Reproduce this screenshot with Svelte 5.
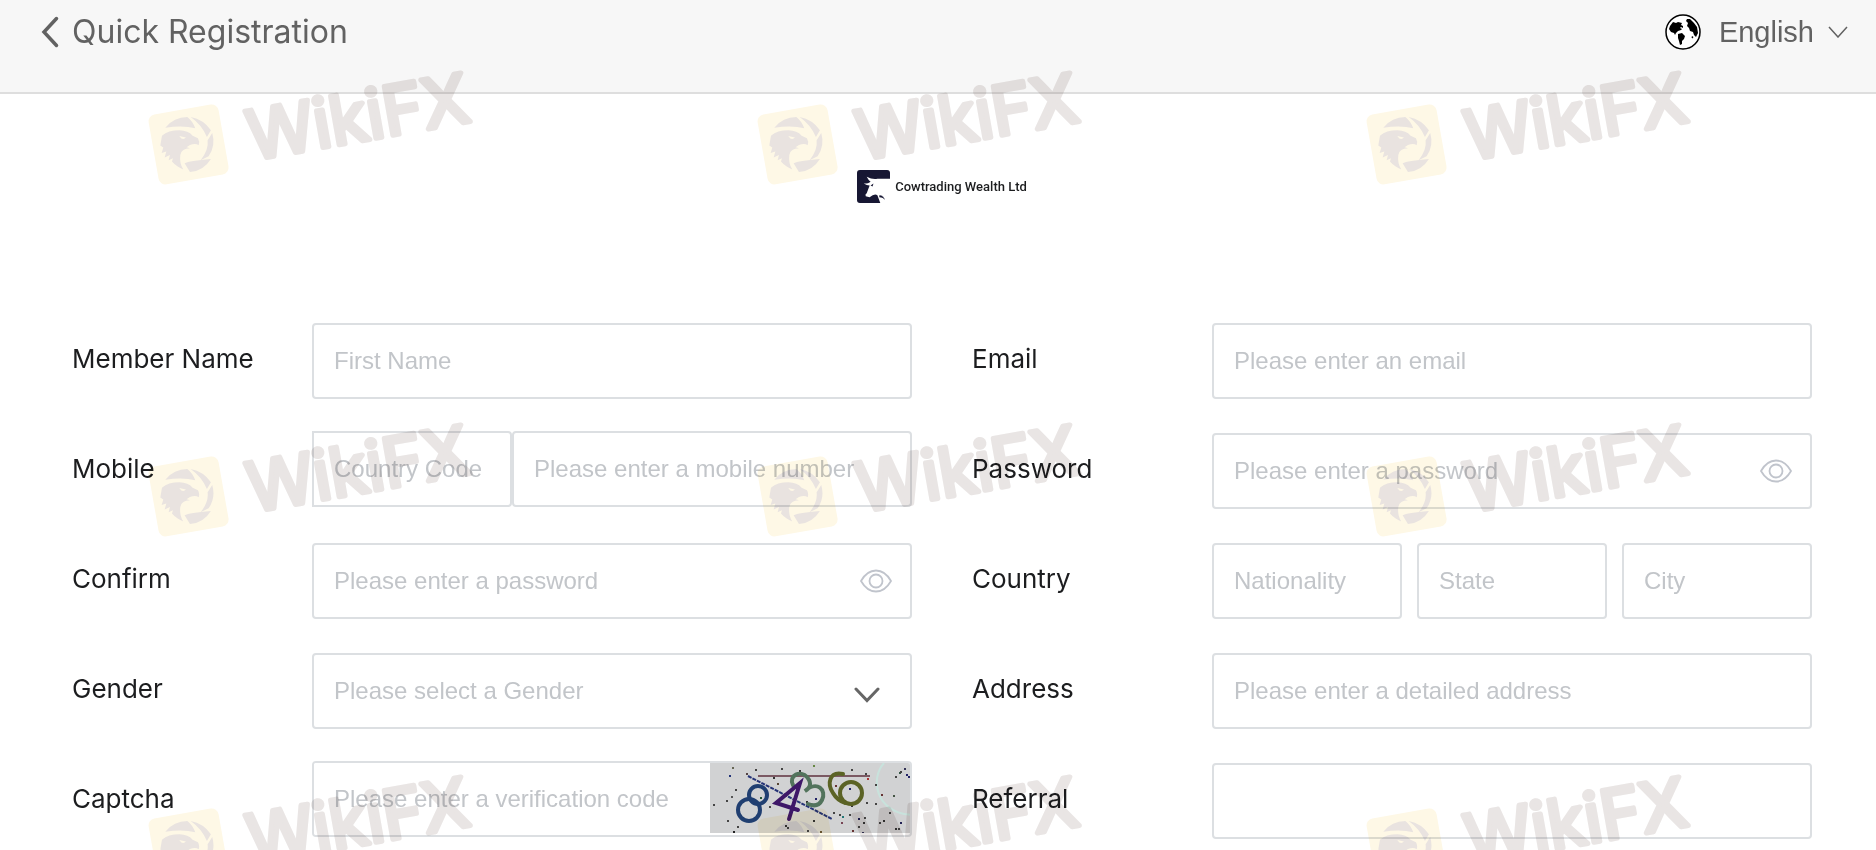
<script>
  const watermarks = Array.from({ length: 9 });

  const spots = [
    [22, 4, '#665'], [19, 12, '#237'], [45, 6, '#444'], [71, 5, '#444'], [89, 7, '#333'], [103, 2, '#684'],
    [141, 6, '#444'], [63, 14, '#333'], [67, 20, '#543'], [25, 26, '#444'], [21, 33, '#555'], [3, 41, '#444'],
    [16, 37, '#444'], [50, 34, '#253'], [96, 38, '#333'], [17, 57, '#444'], [23, 68, '#222'], [27, 63, '#444'],
    [59, 43, '#444'], [75, 62, '#333'], [77, 64, '#444'], [97, 67, '#444'], [103, 57, '#333'], [110, 68, '#653'],
    [123, 49, '#444'], [129, 51, '#444'], [132, 53, '#277'], [139, 51, '#444'], [131, 59, '#745'], [142, 67, '#633'],
    [141, 42, '#333'], [148, 55, '#225'], [154, 54, '#444'], [153, 59, '#333'], [148, 63, '#444'], [152, 69, '#335'],
    [165, 40, '#444'], [171, 31, '#633'], [183, 32, '#454'], [179, 49, '#444'], [173, 57, '#333'], [169, 59, '#444'],
    [190, 59, '#225'], [185, 65, '#333'], [188, 65, '#444'], [185, 13, '#444'], [189, 9, '#354'], [190, 8, '#444'],
    [194, 5, '#335'], [196, 11, '#226'], [198, 13, '#226'], [155, 10, '#444'], [157, 15, '#a33'], [165, 21, '#444'],
    [156, 39, '#444'], [149, 35, '#444'], [139, 25, '#226'], [105, 35, '#226'], [125, 22, '#633'], [36, 10, '#544']
  ];
</script>

{#snippet eye()}
  <svg class="eye" viewBox="0 0 32 24" aria-hidden="true">
    <path d="M1 12C9-2 23-2 31 12C23 26 9 26 1 12Z" />
    <circle cx="16" cy="12" r="6.500" />
  </svg>
{/snippet}

<main class="page">
  <header>
    <button class="back" type="button">
      <svg viewBox="0 0 18 32" aria-hidden="true"><path d="M15.500 2.500 3 16 15.500 29.500" /></svg>
      <span>Quick Registration</span>
    </button>
    <button class="language" type="button">
      <svg class="globe" viewBox="0 0 36 36" aria-hidden="true">
        <circle cx="18" cy="18" r="17" />
        <path d="M5 12 8 8l3 1 2-1 4 1-1 2 2 1 0 2-2-1-1 1 2 1-1 1-3 1-2 2-1 2-1-2-3-1-2-3Z" />
        <path d="M22 5 25 5 29 9 32 13 33 19 31 23 29 21 28 18 25 17 24 14 22 12 23 9 21 7Z" />
        <path d="M13 20 17 19 20 22 19 25 17 27 17 30 15 31 14 27 13 24Z" />
        <path d="M27 22l1.500 1-1 1.500-1-1Z" />
      </svg>
      <span>English</span>
      <svg class="caret" viewBox="0 0 20 12" aria-hidden="true"><path d="m1 1 9 10 9-10" /></svg>
    </button>
  </header>

  <div class="brand">
    <svg viewBox="0 0 34 34" aria-hidden="true">
      <rect width="34" height="34" rx="3" fill="#171733" />
      <path d="M34 9H21Q16 10 10 7Q12 11 14 12Q12 14 7 14Q10 16 13 16L10 24Q8 25 9 27L13 28Q18 24 21 26L24 34H34V30L24 26Q29 27 34 32Z" fill="#fff" />
      <path d="M14 16l3-2-1 3Z" fill="#171733" /><path d="M23 26Q27 26 29 31Q27 28 23 28Z" fill="#171733" />
    </svg>
    <span>Cowtrading Wealth Ltd</span>
  </div>

  <form>
    <div class="row">
      <label for="name">Member Name</label>
      <input id="name" placeholder="First Name" />
    </div>
    <div class="row">
      <label for="email">Email</label>
      <input id="email" type="email" placeholder="Please enter an email" />
    </div>
    <div class="row">
      <label for="mobile">Mobile</label>
      <div class="joined phone">
        <input aria-label="Country Code" placeholder="Country Code" />
        <input id="mobile" type="tel" placeholder="Please enter a mobile number" />
      </div>
    </div>
    <div class="row">
      <label for="password">Password</label>
      <div class="with-icon">
        <input id="password" type="password" placeholder="Please enter a password" />
        {@render eye()}
      </div>
    </div>
    <div class="row">
      <label for="confirm">Confirm</label>
      <div class="with-icon">
        <input id="confirm" type="password" placeholder="Please enter a password" />
        {@render eye()}
      </div>
    </div>
    <div class="row">
      <label for="nationality">Country</label>
      <div class="triple">
        <input id="nationality" placeholder="Nationality" />
        <input aria-label="State" placeholder="State" />
        <input aria-label="City" placeholder="City" />
      </div>
    </div>
    <div class="row">
      <label for="gender">Gender</label>
      <div class="with-icon">
        <select id="gender"><option>Please select a Gender</option></select>
        <svg class="arrow" viewBox="0 0 26 16" aria-hidden="true"><path d="m2 2 11 11.500 11-11.500" /></svg>
      </div>
    </div>
    <div class="row">
      <label for="address">Address</label>
      <input id="address" placeholder="Please enter a detailed address" />
    </div>
    <div class="row">
      <label for="captcha">Captcha</label>
      <div class="joined code">
        <input id="captcha" placeholder="Please enter a verification code" />
        <svg viewBox="0 0 200 70" role="img" aria-label="Captcha">
          <rect width="200" height="70" fill="#d1d2d3" />
          <path d="M202 52C165 50 160 15 174 0" fill="none" stroke="#c8e2dc" stroke-width="2" />
          {#each spots as [x, y, color]}
            <rect {x} {y} width="2" height="2" fill={color} />
          {/each}
          <path d="M48 13H160" stroke="#7b5963" stroke-width="2" />
          <path d="m38 13 84 43" stroke="#263477" stroke-width="2" stroke-dasharray="4 1" />
          <g fill="none" stroke-width="4" stroke-linecap="round">
            <g stroke="#203f71"><circle cx="48" cy="32" r="9" /><circle cx="39" cy="47" r="11" /></g>
            <path d="M83 22C78 12 91 7 97 14S99 26 95 28C107 17 117 27 112 37Q108 45 98 41" stroke="#52735c" />
            <path d="m79 56 11-36-24 20 22 7" stroke="#3e1768" />
            <g stroke="#5b6325"><circle cx="141" cy="30" r="11" /><path d="M133 11C119 8 117 21 123 30Q127 37 135 40" /></g>
          </g>
        </svg>
      </div>
    </div>
    <div class="row">
      <label for="referral">Referral</label>
      <input id="referral" />
    </div>
  </form>

  <div class="watermarks" aria-hidden="true">
    {#each watermarks as _}
      <svg viewBox="0 0 609 352">
        <rect x="153" y="51" width="71" height="71" rx="7" fill="#fef8e6" transform="rotate(-10 188 86)" />
        <g fill="#e9e3e0" transform="translate(140 37) scale(.333)">
          <path d="M76 98Q102 66 142 66Q158 78 166 100Q130 90 76 98Z" />
          <path d="M152 66Q192 74 213 106L201 126Q186 90 152 66Z" />
          <path d="M217 114Q228 152 206 184L182 196Q207 164 203 136Z" />
          <path d="M213 192Q190 229 150 231L134 205Q148 197 213 192Z" />
          <path fill-rule="evenodd" d="M66 122Q85 106 118 106Q145 107 158 122L174 130Q180 140 176 151Q168 144 150 150L140 157 150 160Q125 160 121 180Q118 205 130 224Q108 214 96 200L99 190 86 196 90 180 74 188 79 170 65 174 70 158 61 152ZM118 123L138 128Q132 135 124 131Z" />
        </g>
        <text x="248" y="113" transform="rotate(-10 188 86)">WikiFX</text>
      </svg>
    {/each}
  </div>
</main>

<style>
  :global(body) { margin: 0; background: #fff; }
  .page {
    position: relative; box-sizing: border-box; min-height: 100vh; overflow: hidden;
    padding-bottom: 10px; background: #fff; font-family: "Liberation Sans", Arial, sans-serif; color: #1c1d1f;
  }
  * { box-sizing: border-box; }
  header {
    display: flex; justify-content: space-between; align-items: center;
    padding: 0 28px 28px 41px; background: #f7f7f7; border-bottom: 2px solid #dedede;
  }
  button {
    display: flex; align-items: center; height: 64px; padding: 0; border: 0;
    background: none; font: inherit; color: #626262; cursor: pointer;
  }
  .back { gap: 13px; font: 32px/40px Inter, sans-serif; }
  .back svg { width: 18px; height: 32px; fill: none; stroke: #626262; stroke-width: 3.500; stroke-linecap: round; }
  .language { font-size: 29px; line-height: 36px; }
  .globe { width: 36px; height: 36px; margin-right: 18px; }
  .globe circle { fill: #fff; stroke: #000; stroke-width: 1.500; }
  .caret { width: 20px; height: 12px; margin-left: 14px; fill: none; stroke: #626262; stroke-width: 1.500; }
  .brand {
    display: flex; align-items: center; justify-content: center; gap: 5px;
    padding: 76px 0 120px 8px; font: 500 13px/18px Roboto, sans-serif;
  }
  .brand svg { width: 33px; height: 33px; }
  form { display: grid; grid-template-columns: 1fr 1fr; gap: 34px 60px; padding: 0 64px 0 72px; }
  .row { display: grid; grid-template-columns: 240px 1fr; align-items: center; height: 76px; }
  label { padding-bottom: 4px; font: 26px/36px Inter, sans-serif; }
  input, select {
    display: block; width: 100%; min-width: 0; height: 76px; padding: 0 20px; border: 2px solid #dcdfe2;
    border-radius: 4px; background: #fff; font: 24px/32px "Liberation Sans", Arial, sans-serif; color: #333; outline: 0;
  }
  select { appearance: none; color: #c2c5c9; }
  input::placeholder { color: #c2c5c9; opacity: 1; }
  .with-icon { display: grid; align-items: center; }
  .with-icon > :global(*) { grid-area: 1 / 1; }
  .eye, .arrow { justify-self: end; fill: none; pointer-events: none; }
  .eye { width: 32px; height: 24px; margin-right: 20px; stroke: #c0c4cc; stroke-width: 1.800; }
  .arrow { width: 26px; height: 16px; margin: 8px 32px 0 0; stroke: #666; stroke-width: 3; stroke-linecap: round; }
  .joined { display: grid; margin-top: -4px; }
  .phone { grid-template-columns: 1fr 2fr; }
  .phone input:first-child { border-radius: 0 4px 4px 0; }
  .triple { display: grid; grid-template-columns: repeat(3, 1fr); gap: 15px; }
  .code { grid-template-columns: 1fr 200px; height: 76px; border: 2px solid #dcdfe2; border-radius: 4px; overflow: hidden; }
  .code input { height: 72px; border: 0; border-radius: 0; }
  .code svg { width: 200px; height: 70px; }
  .watermarks {
    position: absolute; top: 58px; left: 0; display: grid;
    grid-template-columns: repeat(3, 609px); pointer-events: none; mix-blend-mode: multiply;
  }
  .watermarks svg { display: block; width: 609px; height: 352px; overflow: visible; }
  .watermarks text {
    font: 68px Inter, sans-serif; fill: #e9e5e4; stroke: #e9e5e4;
    stroke-width: 5; stroke-linejoin: round;
  }
</style>
